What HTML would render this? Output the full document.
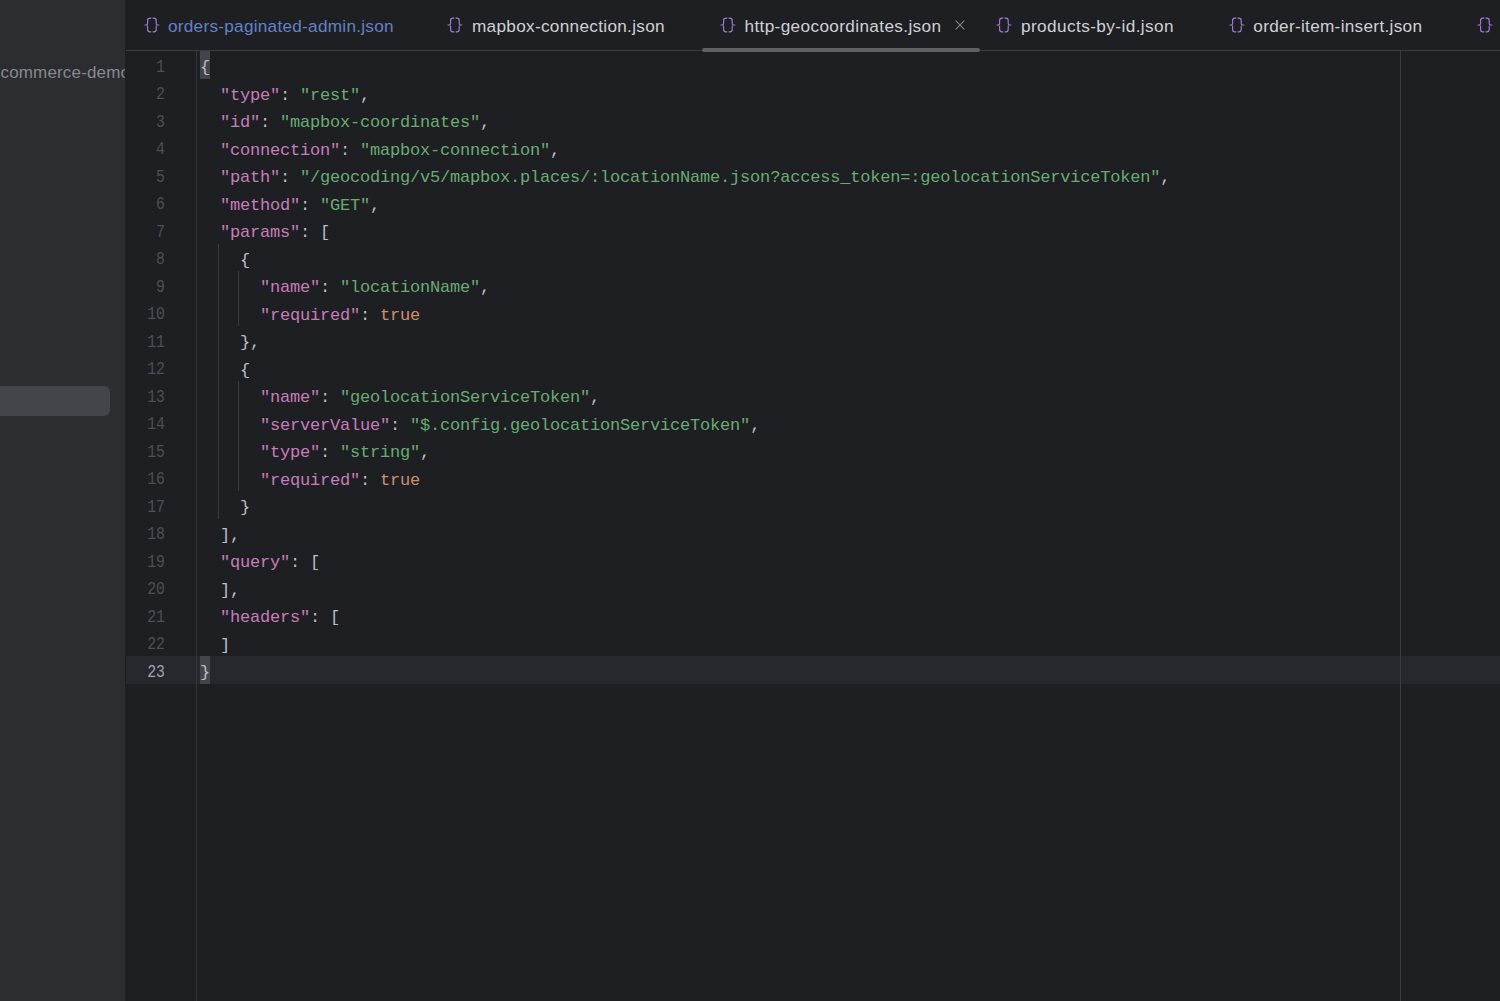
<!DOCTYPE html>
<html><head><meta charset="utf-8"><style>
html,body{margin:0;padding:0;}
body{width:1500px;height:1001px;overflow:hidden;background:#1E1F22;position:relative;font-family:"Liberation Sans",sans-serif;}
.abs{position:absolute;}
#side{left:0;top:0;width:125px;height:1001px;background:#2B2D30;overflow:hidden;}
#proj{left:0.5px;top:62px;font-size:17px;letter-spacing:0.16px;color:#868990;white-space:pre;line-height:22px;}
#sel{left:0;top:386.3px;width:110px;height:30px;background:#43454A;border-radius:0 6px 6px 0;}
#tabline{left:126px;top:50px;width:1374px;height:1px;background:#393B40;}
.ic{position:absolute;top:17px;}
.tt{position:absolute;top:15.3px;font-size:17.2px;letter-spacing:0.3px;line-height:22px;color:#CFD1D6;white-space:pre;}
.tt.mod{color:#6282C8;}
#uline{left:702px;top:48px;width:278px;height:4px;border-radius:2px;background:#5F6166;}
#close{left:955px;top:20px;}
#gsep{left:196px;top:51px;width:1px;height:950px;background:#333539;}
#margin{left:1400px;top:51px;width:1px;height:950px;background:#393B40;}
.ln{position:absolute;left:125px;width:40px;text-align:right;font-family:"Liberation Mono",monospace;font-size:19px;transform:scaleX(0.78);transform-origin:100% 0;color:#4B5059;white-space:pre;}
.cl{position:absolute;left:200px;font-family:"Liberation Mono",monospace;font-size:17.0px;letter-spacing:-0.2px;color:#BCBEC4;white-space:pre;}
.k{color:#C77DBB;}
.s{color:#6AAB73;}
.t{color:#CF8E6D;}
#curline{left:126px;top:656px;width:1374px;height:28px;background:#26282E;}
.bm{position:absolute;left:200px;width:10px;height:28px;background:#43454A;}
.guide{position:absolute;width:1px;background:#393B40;}
</style></head><body>
<div id="side" class="abs"><div id="proj" class="abs">commerce-demo</div><div id="sel" class="abs"></div></div>
<div id="tabline" class="abs"></div>
<svg class="ic" style="left:144px" width="16" height="16" viewBox="0 0 16 16"><path d="M7.2 1.1H5.9C4.4 1.1 3.6 1.9 3.6 3.4V6.6C3.6 7.5 3.1 8 2.2 8H0.5M2.2 8C3.1 8 3.6 8.5 3.6 9.4V12.6C3.6 14.1 4.4 14.9 5.9 14.9H7.2M8.6 1.1H9.9C11.4 1.1 12.2 1.9 12.2 3.4V6.6C12.2 7.5 12.7 8 13.6 8H15.3M13.6 8C12.7 8 12.2 8.5 12.2 9.4V12.6C12.2 14.1 11.4 14.9 9.9 14.9H8.6" fill="none" stroke="#A27CD8" stroke-width="1.15"/></svg><div class="tt mod" style="left:168px;letter-spacing:0.26px">orders-paginated-admin.json</div><svg class="ic" style="left:447px" width="16" height="16" viewBox="0 0 16 16"><path d="M7.2 1.1H5.9C4.4 1.1 3.6 1.9 3.6 3.4V6.6C3.6 7.5 3.1 8 2.2 8H0.5M2.2 8C3.1 8 3.6 8.5 3.6 9.4V12.6C3.6 14.1 4.4 14.9 5.9 14.9H7.2M8.6 1.1H9.9C11.4 1.1 12.2 1.9 12.2 3.4V6.6C12.2 7.5 12.7 8 13.6 8H15.3M13.6 8C12.7 8 12.2 8.5 12.2 9.4V12.6C12.2 14.1 11.4 14.9 9.9 14.9H8.6" fill="none" stroke="#A27CD8" stroke-width="1.15"/></svg><div class="tt " style="left:472px;letter-spacing:0.3px">mapbox-connection.json</div><svg class="ic" style="left:720px" width="16" height="16" viewBox="0 0 16 16"><path d="M7.2 1.1H5.9C4.4 1.1 3.6 1.9 3.6 3.4V6.6C3.6 7.5 3.1 8 2.2 8H0.5M2.2 8C3.1 8 3.6 8.5 3.6 9.4V12.6C3.6 14.1 4.4 14.9 5.9 14.9H7.2M8.6 1.1H9.9C11.4 1.1 12.2 1.9 12.2 3.4V6.6C12.2 7.5 12.7 8 13.6 8H15.3M13.6 8C12.7 8 12.2 8.5 12.2 9.4V12.6C12.2 14.1 11.4 14.9 9.9 14.9H8.6" fill="none" stroke="#A27CD8" stroke-width="1.15"/></svg><div class="tt act" style="left:744.5px;letter-spacing:0.36px">http-geocoordinates.json</div><svg class="ic" style="left:996px" width="16" height="16" viewBox="0 0 16 16"><path d="M7.2 1.1H5.9C4.4 1.1 3.6 1.9 3.6 3.4V6.6C3.6 7.5 3.1 8 2.2 8H0.5M2.2 8C3.1 8 3.6 8.5 3.6 9.4V12.6C3.6 14.1 4.4 14.9 5.9 14.9H7.2M8.6 1.1H9.9C11.4 1.1 12.2 1.9 12.2 3.4V6.6C12.2 7.5 12.7 8 13.6 8H15.3M13.6 8C12.7 8 12.2 8.5 12.2 9.4V12.6C12.2 14.1 11.4 14.9 9.9 14.9H8.6" fill="none" stroke="#A27CD8" stroke-width="1.15"/></svg><div class="tt " style="left:1021px;letter-spacing:0.41px">products-by-id.json</div><svg class="ic" style="left:1229px" width="16" height="16" viewBox="0 0 16 16"><path d="M7.2 1.1H5.9C4.4 1.1 3.6 1.9 3.6 3.4V6.6C3.6 7.5 3.1 8 2.2 8H0.5M2.2 8C3.1 8 3.6 8.5 3.6 9.4V12.6C3.6 14.1 4.4 14.9 5.9 14.9H7.2M8.6 1.1H9.9C11.4 1.1 12.2 1.9 12.2 3.4V6.6C12.2 7.5 12.7 8 13.6 8H15.3M13.6 8C12.7 8 12.2 8.5 12.2 9.4V12.6C12.2 14.1 11.4 14.9 9.9 14.9H8.6" fill="none" stroke="#A27CD8" stroke-width="1.15"/></svg><div class="tt " style="left:1253.3px;letter-spacing:0.3px">order-item-insert.json</div><svg class="ic" style="left:1477px" width="16" height="16" viewBox="0 0 16 16"><path d="M7.2 1.1H5.9C4.4 1.1 3.6 1.9 3.6 3.4V6.6C3.6 7.5 3.1 8 2.2 8H0.5M2.2 8C3.1 8 3.6 8.5 3.6 9.4V12.6C3.6 14.1 4.4 14.9 5.9 14.9H7.2M8.6 1.1H9.9C11.4 1.1 12.2 1.9 12.2 3.4V6.6C12.2 7.5 12.7 8 13.6 8H15.3M13.6 8C12.7 8 12.2 8.5 12.2 9.4V12.6C12.2 14.1 11.4 14.9 9.9 14.9H8.6" fill="none" stroke="#A27CD8" stroke-width="1.15"/></svg>
<div id="uline" class="abs"></div>
<svg id="close" class="abs" width="10" height="10" viewBox="0 0 10 10"><path d="M0.7 0.7L9.3 9.3M9.3 0.7L0.7 9.3" stroke="#7E8188" stroke-width="1.2"/></svg>
<div id="curline" class="abs"></div>
<div id="gsep" class="abs"></div><div id="margin" class="abs"></div>
<div class="bm" style="top:51.00px"></div><div class="bm" style="top:656.00px"></div><div class="guide" style="left:218px;top:243.50px;height:275.00px"></div><div class="guide" style="left:238px;top:271.00px;height:55.00px"></div><div class="guide" style="left:238px;top:381.00px;height:110.00px"></div>
<div class="ln" style="top:53.60px;height:27.5px;line-height:27.5px"><span>1</span></div><div class="cl" style="top:54.20px;height:27.5px;line-height:27.5px">{</div>
<div class="ln" style="top:81.10px;height:27.5px;line-height:27.5px"><span>2</span></div><div class="cl" style="top:81.70px;height:27.5px;line-height:27.5px">  <span class="k">&quot;type&quot;</span>: <span class="s">&quot;rest&quot;</span>,</div>
<div class="ln" style="top:108.60px;height:27.5px;line-height:27.5px"><span>3</span></div><div class="cl" style="top:109.20px;height:27.5px;line-height:27.5px">  <span class="k">&quot;id&quot;</span>: <span class="s">&quot;mapbox-coordinates&quot;</span>,</div>
<div class="ln" style="top:136.10px;height:27.5px;line-height:27.5px"><span>4</span></div><div class="cl" style="top:136.70px;height:27.5px;line-height:27.5px">  <span class="k">&quot;connection&quot;</span>: <span class="s">&quot;mapbox-connection&quot;</span>,</div>
<div class="ln" style="top:163.60px;height:27.5px;line-height:27.5px"><span>5</span></div><div class="cl" style="top:164.20px;height:27.5px;line-height:27.5px">  <span class="k">&quot;path&quot;</span>: <span class="s">&quot;/geocoding/v5/mapbox.places/:locationName.json?access_token=:geolocationServiceToken&quot;</span>,</div>
<div class="ln" style="top:191.10px;height:27.5px;line-height:27.5px"><span>6</span></div><div class="cl" style="top:191.70px;height:27.5px;line-height:27.5px">  <span class="k">&quot;method&quot;</span>: <span class="s">&quot;GET&quot;</span>,</div>
<div class="ln" style="top:218.60px;height:27.5px;line-height:27.5px"><span>7</span></div><div class="cl" style="top:219.20px;height:27.5px;line-height:27.5px">  <span class="k">&quot;params&quot;</span>: [</div>
<div class="ln" style="top:246.10px;height:27.5px;line-height:27.5px"><span>8</span></div><div class="cl" style="top:246.70px;height:27.5px;line-height:27.5px">    {</div>
<div class="ln" style="top:273.60px;height:27.5px;line-height:27.5px"><span>9</span></div><div class="cl" style="top:274.20px;height:27.5px;line-height:27.5px">      <span class="k">&quot;name&quot;</span>: <span class="s">&quot;locationName&quot;</span>,</div>
<div class="ln" style="top:301.10px;height:27.5px;line-height:27.5px"><span>10</span></div><div class="cl" style="top:301.70px;height:27.5px;line-height:27.5px">      <span class="k">&quot;required&quot;</span>: <span class="t">true</span></div>
<div class="ln" style="top:328.60px;height:27.5px;line-height:27.5px"><span>11</span></div><div class="cl" style="top:329.20px;height:27.5px;line-height:27.5px">    },</div>
<div class="ln" style="top:356.10px;height:27.5px;line-height:27.5px"><span>12</span></div><div class="cl" style="top:356.70px;height:27.5px;line-height:27.5px">    {</div>
<div class="ln" style="top:383.60px;height:27.5px;line-height:27.5px"><span>13</span></div><div class="cl" style="top:384.20px;height:27.5px;line-height:27.5px">      <span class="k">&quot;name&quot;</span>: <span class="s">&quot;geolocationServiceToken&quot;</span>,</div>
<div class="ln" style="top:411.10px;height:27.5px;line-height:27.5px"><span>14</span></div><div class="cl" style="top:411.70px;height:27.5px;line-height:27.5px">      <span class="k">&quot;serverValue&quot;</span>: <span class="s">&quot;$.config.geolocationServiceToken&quot;</span>,</div>
<div class="ln" style="top:438.60px;height:27.5px;line-height:27.5px"><span>15</span></div><div class="cl" style="top:439.20px;height:27.5px;line-height:27.5px">      <span class="k">&quot;type&quot;</span>: <span class="s">&quot;string&quot;</span>,</div>
<div class="ln" style="top:466.10px;height:27.5px;line-height:27.5px"><span>16</span></div><div class="cl" style="top:466.70px;height:27.5px;line-height:27.5px">      <span class="k">&quot;required&quot;</span>: <span class="t">true</span></div>
<div class="ln" style="top:493.60px;height:27.5px;line-height:27.5px"><span>17</span></div><div class="cl" style="top:494.20px;height:27.5px;line-height:27.5px">    }</div>
<div class="ln" style="top:521.10px;height:27.5px;line-height:27.5px"><span>18</span></div><div class="cl" style="top:521.70px;height:27.5px;line-height:27.5px">  ],</div>
<div class="ln" style="top:548.60px;height:27.5px;line-height:27.5px"><span>19</span></div><div class="cl" style="top:549.20px;height:27.5px;line-height:27.5px">  <span class="k">&quot;query&quot;</span>: [</div>
<div class="ln" style="top:576.10px;height:27.5px;line-height:27.5px"><span>20</span></div><div class="cl" style="top:576.70px;height:27.5px;line-height:27.5px">  ],</div>
<div class="ln" style="top:603.60px;height:27.5px;line-height:27.5px"><span>21</span></div><div class="cl" style="top:604.20px;height:27.5px;line-height:27.5px">  <span class="k">&quot;headers&quot;</span>: [</div>
<div class="ln" style="top:631.10px;height:27.5px;line-height:27.5px"><span>22</span></div><div class="cl" style="top:631.70px;height:27.5px;line-height:27.5px">  ]</div>
<div class="ln" style="top:658.60px;height:27.5px;line-height:27.5px"><span style="color:#A1A3AB">23</span></div><div class="cl" style="top:659.20px;height:27.5px;line-height:27.5px">}</div>
</body></html>
